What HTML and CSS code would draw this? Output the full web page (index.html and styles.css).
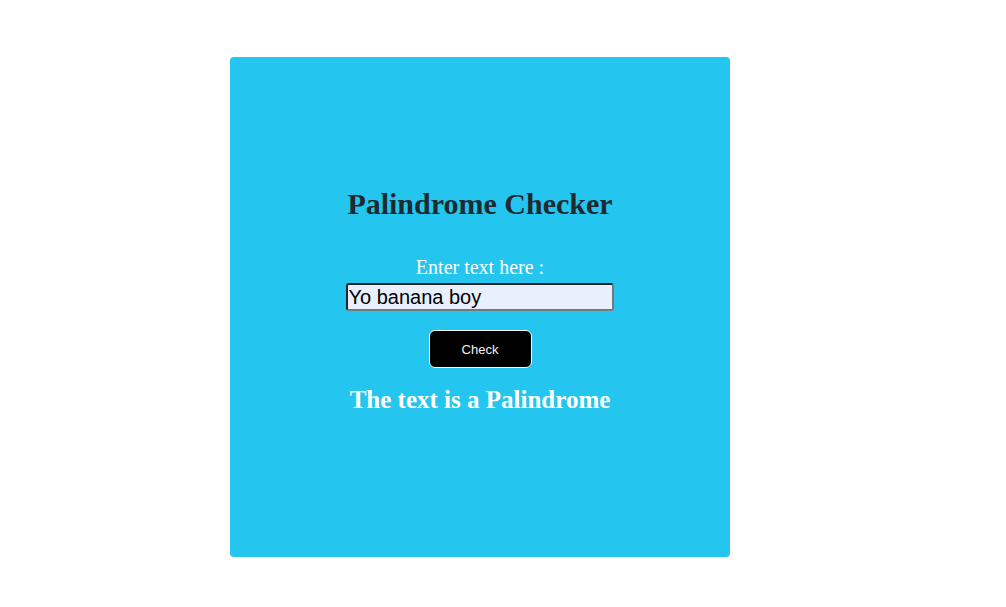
FILE: index.html
```html
<!DOCTYPE html>
<html>
<head>
<meta charset="utf-8">
<link rel="stylesheet" href="styles.css">
</head>
<body>
<div class="page">
  <div class="card">
    <h1 class="title">Palindrome Checker</h1>
    <label class="label" for="txt">Enter text here :</label>
    <input class="input" id="txt" type="text" value="Yo banana boy">
    <button class="btn">Check</button>
    <h2 class="result">The text is a Palindrome</h2>
  </div>
</div>
</body>
</html>
```

FILE: styles.css
```css
html, body {
  margin: 0;
  padding: 0;
  background: #ffffff;
}
.page {
  width: 1006px;
  height: 607px;
  display: flex;
  justify-content: flex-start;
  align-items: flex-start;
  padding: 57px 0 0 230px;
  box-sizing: border-box;
}
.card {
  width: 500px;
  height: 500px;
  background: #24c5ee;
  border-radius: 4px;
  display: flex;
  flex-direction: column;
  align-items: center;
  justify-content: flex-start;
  font-family: "Liberation Serif", serif;
  padding-top: 130px;
  box-sizing: border-box;
}
.title {
  margin: 0 0 34px;
  font-size: 30px;
  font-weight: bold;
  color: #1d2a30;
  line-height: 34px;
}
.label {
  font-size: 20px;
  color: #ffffff;
  line-height: 24px;
}
.input {
  width: 268px;
  height: 28px;
  box-sizing: border-box;
  margin: 4px 1px 0 0;
  padding: 0 0 0 1px;
  font-family: "Liberation Sans", sans-serif;
  font-size: 20px;
  color: #000;
  background: #e8f0fe;
  border: 2px solid;
  border-color: #222427 #76787a #76787a #222427;
  border-radius: 3px;
  outline: none;
}
.btn {
  margin-top: 19px;
  width: 103px;
  height: 38px;
  background: #000;
  color: #f2f2f2;
  border: 1px solid #ffffff;
  border-radius: 6px;
  font-family: "Liberation Sans", sans-serif;
  font-size: 13px;
}
.result {
  margin: 18px 0 0;
  font-size: 25px;
  font-weight: bold;
  color: #ffffff;
  line-height: 28px;
}
```
